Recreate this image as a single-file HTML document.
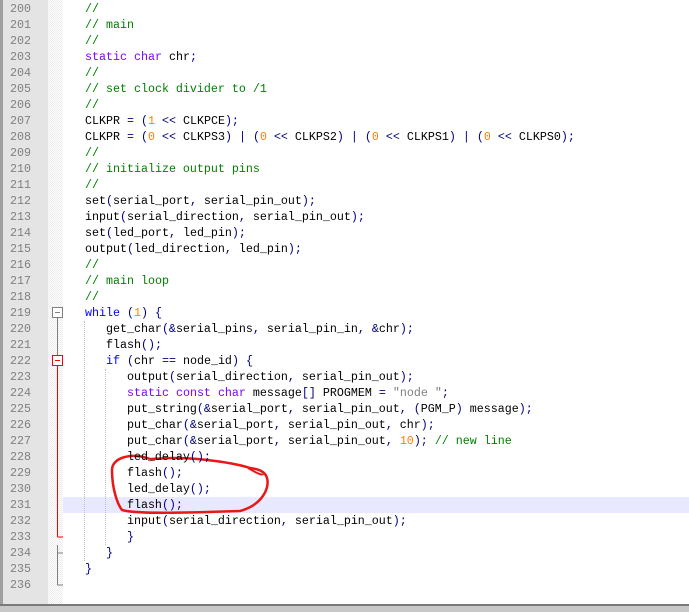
<!DOCTYPE html>
<html><head><meta charset="utf-8">
<style>
html,body{margin:0;padding:0;width:689px;height:612px;overflow:hidden;background:#fff;}
body{position:relative;font-family:"Liberation Mono",monospace;font-size:11.67px;}
#lb{position:absolute;left:0;top:0;width:3px;height:612px;background:#a0a0a0;}
#ln{position:absolute;left:3px;top:0;width:45px;height:606px;background:#e4e4e4;}
#fm{position:absolute;left:48px;top:0;width:15px;height:606px;background:#f4f4f4;
 background-image:repeating-conic-gradient(#fff 0 25%,#ececec 0 50%);background-size:2px 2px;}
#bot{position:absolute;left:0;top:604px;width:689px;height:8px;background:#c8c8c8;border-top:2px solid #7a7a7a;box-sizing:border-box;}
.row{position:absolute;left:0;height:16px;line-height:16px;white-space:pre;}
.n{position:absolute;left:3px;width:28px;text-align:right;color:#808080;}
.c{position:absolute;left:64px;color:#000;}
.k{color:#0000ff}.t{color:#8000ff}.m{color:#008000}.d{color:#ff8000}.s{color:#808080}.o{color:#000080}
#hl{position:absolute;left:63px;top:497px;width:626px;height:16px;background:#e8e8ff;}
.g{position:absolute;border-left:1px dotted #c0c0c0;}
</style></head><body>
<div id="lb"></div><div id="ln"></div><div id="fm"></div>
<div id="hl"></div>
<div class="g" style="left:84px;top:321px;height:240px"></div>
<div class="g" style="left:105px;top:369px;height:176px"></div>
<svg style="position:absolute;left:0;top:0" width="689" height="612">
<line x1="57.5" y1="318" x2="57.5" y2="355" stroke="#808080"/>
<line x1="57.5" y1="366" x2="57.5" y2="537" stroke="#ff0000"/>
<line x1="57.5" y1="537" x2="63" y2="537" stroke="#ff0000"/>
<line x1="57.5" y1="545" x2="57.5" y2="585" stroke="#808080"/>
<line x1="57.5" y1="553" x2="63" y2="553" stroke="#808080"/>
<line x1="57.5" y1="585" x2="63" y2="585" stroke="#808080"/>
<rect x="52.5" y="307.5" width="10" height="10" fill="#fff" stroke="#808080"/>
<line x1="55" y1="312.5" x2="60" y2="312.5" stroke="#808080"/>
<rect x="52.5" y="355.5" width="10" height="10" fill="#fff" stroke="#ff0000"/>
<line x1="55" y1="360.5" x2="60" y2="360.5" stroke="#ff0000"/>
<path d="M150,459 C130,452 112,458 112,470 C112,490 118,505 122,510 C135,514 180,513 240,511 C262,505 270,488 267,478 C265,471 258,469 250,468 C235,463 200,458 175,458 C165,458 155,459 150,459" fill="none" stroke="#e81818" stroke-width="2.5"/>
<path d="M248,468 C255,472 262,476 263,474" fill="none" stroke="#e81818" stroke-width="2"/>
</svg>
<div id="bot"></div>
<div id="code">
<div class="row" style="top:1px"><span class="n">200</span><span class="c">   <span class="m">//</span></span></div>
<div class="row" style="top:17px"><span class="n">201</span><span class="c">   <span class="m">// main</span></span></div>
<div class="row" style="top:33px"><span class="n">202</span><span class="c">   <span class="m">//</span></span></div>
<div class="row" style="top:49px"><span class="n">203</span><span class="c">   <span class="t">static</span> <span class="t">char</span> chr<span class="o">;</span></span></div>
<div class="row" style="top:65px"><span class="n">204</span><span class="c">   <span class="m">//</span></span></div>
<div class="row" style="top:81px"><span class="n">205</span><span class="c">   <span class="m">// set clock divider to /1</span></span></div>
<div class="row" style="top:97px"><span class="n">206</span><span class="c">   <span class="m">//</span></span></div>
<div class="row" style="top:113px"><span class="n">207</span><span class="c">   CLKPR <span class="o">=</span> <span class="o">(</span><span class="d">1</span> <span class="o">&lt;&lt;</span> CLKPCE<span class="o">);</span></span></div>
<div class="row" style="top:129px"><span class="n">208</span><span class="c">   CLKPR <span class="o">=</span> <span class="o">(</span><span class="d">0</span> <span class="o">&lt;&lt;</span> CLKPS3<span class="o">)</span> <span class="o">|</span> <span class="o">(</span><span class="d">0</span> <span class="o">&lt;&lt;</span> CLKPS2<span class="o">)</span> <span class="o">|</span> <span class="o">(</span><span class="d">0</span> <span class="o">&lt;&lt;</span> CLKPS1<span class="o">)</span> <span class="o">|</span> <span class="o">(</span><span class="d">0</span> <span class="o">&lt;&lt;</span> CLKPS0<span class="o">);</span></span></div>
<div class="row" style="top:145px"><span class="n">209</span><span class="c">   <span class="m">//</span></span></div>
<div class="row" style="top:161px"><span class="n">210</span><span class="c">   <span class="m">// initialize output pins</span></span></div>
<div class="row" style="top:177px"><span class="n">211</span><span class="c">   <span class="m">//</span></span></div>
<div class="row" style="top:193px"><span class="n">212</span><span class="c">   set<span class="o">(</span>serial_port<span class="o">,</span> serial_pin_out<span class="o">);</span></span></div>
<div class="row" style="top:209px"><span class="n">213</span><span class="c">   input<span class="o">(</span>serial_direction<span class="o">,</span> serial_pin_out<span class="o">);</span></span></div>
<div class="row" style="top:225px"><span class="n">214</span><span class="c">   set<span class="o">(</span>led_port<span class="o">,</span> led_pin<span class="o">);</span></span></div>
<div class="row" style="top:241px"><span class="n">215</span><span class="c">   output<span class="o">(</span>led_direction<span class="o">,</span> led_pin<span class="o">);</span></span></div>
<div class="row" style="top:257px"><span class="n">216</span><span class="c">   <span class="m">//</span></span></div>
<div class="row" style="top:273px"><span class="n">217</span><span class="c">   <span class="m">// main loop</span></span></div>
<div class="row" style="top:289px"><span class="n">218</span><span class="c">   <span class="m">//</span></span></div>
<div class="row" style="top:305px"><span class="n">219</span><span class="c">   <span class="k">while</span> <span class="o">(</span><span class="d">1</span><span class="o">)</span> <span class="o">{</span></span></div>
<div class="row" style="top:321px"><span class="n">220</span><span class="c">      get_char<span class="o">(&amp;</span>serial_pins<span class="o">,</span> serial_pin_in<span class="o">,</span> <span class="o">&amp;</span>chr<span class="o">);</span></span></div>
<div class="row" style="top:337px"><span class="n">221</span><span class="c">      flash<span class="o">();</span></span></div>
<div class="row" style="top:353px"><span class="n">222</span><span class="c">      <span class="k">if</span> <span class="o">(</span>chr <span class="o">==</span> node_id<span class="o">)</span> <span class="o">{</span></span></div>
<div class="row" style="top:369px"><span class="n">223</span><span class="c">         output<span class="o">(</span>serial_direction<span class="o">,</span> serial_pin_out<span class="o">);</span></span></div>
<div class="row" style="top:385px"><span class="n">224</span><span class="c">         <span class="t">static</span> <span class="t">const</span> <span class="t">char</span> message<span class="o">[]</span> PROGMEM <span class="o">=</span> <span class="s">"node "</span><span class="o">;</span></span></div>
<div class="row" style="top:401px"><span class="n">225</span><span class="c">         put_string<span class="o">(&amp;</span>serial_port<span class="o">,</span> serial_pin_out<span class="o">,</span> <span class="o">(</span>PGM_P<span class="o">)</span> message<span class="o">);</span></span></div>
<div class="row" style="top:417px"><span class="n">226</span><span class="c">         put_char<span class="o">(&amp;</span>serial_port<span class="o">,</span> serial_pin_out<span class="o">,</span> chr<span class="o">);</span></span></div>
<div class="row" style="top:433px"><span class="n">227</span><span class="c">         put_char<span class="o">(&amp;</span>serial_port<span class="o">,</span> serial_pin_out<span class="o">,</span> <span class="d">10</span><span class="o">);</span> <span class="m">// new line</span></span></div>
<div class="row" style="top:449px"><span class="n">228</span><span class="c">         led_delay<span class="o">();</span></span></div>
<div class="row" style="top:465px"><span class="n">229</span><span class="c">         flash<span class="o">();</span></span></div>
<div class="row" style="top:481px"><span class="n">230</span><span class="c">         led_delay<span class="o">();</span></span></div>
<div class="row" style="top:497px"><span class="n">231</span><span class="c">         flash<span class="o">();</span></span></div>
<div class="row" style="top:513px"><span class="n">232</span><span class="c">         input<span class="o">(</span>serial_direction<span class="o">,</span> serial_pin_out<span class="o">);</span></span></div>
<div class="row" style="top:529px"><span class="n">233</span><span class="c">         <span class="o">}</span></span></div>
<div class="row" style="top:545px"><span class="n">234</span><span class="c">      <span class="o">}</span></span></div>
<div class="row" style="top:561px"><span class="n">235</span><span class="c">   <span class="o">}</span></span></div>
<div class="row" style="top:577px"><span class="n">236</span><span class="c"></span></div>
</div>
</body></html>
